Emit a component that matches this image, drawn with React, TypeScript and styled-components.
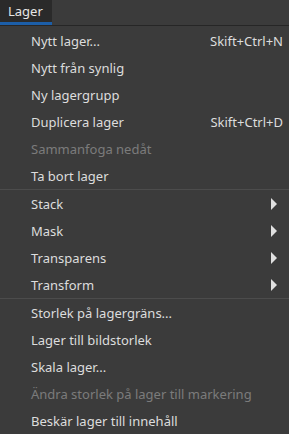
import React from 'react';
import styled, { createGlobalStyle } from 'styled-components';

const GlobalStyle = createGlobalStyle`
  html, body {
    margin: 0;
    padding: 0;
    background: #3b3b3b;
    width: 289px;
    height: 434px;
    overflow: hidden;
  }
`;

const Page = styled.div`
  width: 289px;
  height: 434px;
  background: #3b3b3b;
  font-family: 'Noto Sans', 'Open Sans', sans-serif;
  font-size: 13px;
  color: #dddddd;
  display: flex;
  flex-direction: column;
`;

const MenuBar = styled.div`
  height: 25px;
  display: flex;
  background: #3b3b3b;
  border-bottom: 1px solid #262626;
`;

const MenuTitle = styled.div`
  width: 52px;
  box-sizing: border-box;
  padding: 0 8px;
  background: #2a2a2a;
  border-bottom: 3px solid #1c5ea8;
  line-height: 22px;
  color: #e6e6e6;
`;

const Menu = styled.div`
  padding-top: 1px;
  display: flex;
  flex-direction: column;
`;

const Item = styled.div<{ disabled?: boolean }>`
  height: 27px;
  flex-shrink: 0;
  display: flex;
  align-items: center;
  padding: 0 6px 0 31px;
  color: ${({ disabled }) => (disabled ? '#7b7b7b' : '#dddddd')};
`;

const Label = styled.span`
  flex: 1;
  white-space: nowrap;
`;

const Shortcut = styled.span`
  white-space: nowrap;
`;

const Arrow = styled.svg`
  width: 6px;
  height: 12px;
  margin-right: 6px;
`;

const Separator = styled.div`
  height: 1px;
  flex-shrink: 0;
  background: #4c4c4c;
`;

type Entry = { label: string; shortcut?: string; disabled?: boolean; sub?: boolean } | 'sep';

const entries: Entry[] = [
  { label: 'Nytt lager...', shortcut: 'Skift+Ctrl+N' },
  { label: 'Nytt från synlig' },
  { label: 'Ny lagergrupp' },
  { label: 'Duplicera lager', shortcut: 'Skift+Ctrl+D' },
  { label: 'Sammanfoga nedåt', disabled: true },
  { label: 'Ta bort lager' },
  'sep',
  { label: 'Stack', sub: true },
  { label: 'Mask', sub: true },
  { label: 'Transparens', sub: true },
  { label: 'Transform', sub: true },
  'sep',
  { label: 'Storlek på lagergräns...' },
  { label: 'Lager till bildstorlek' },
  { label: 'Skala lager...' },
  { label: 'Ändra storlek på lager till markering', disabled: true },
  { label: 'Beskär lager till innehåll' },
];

export default function App() {
  return (
    <Page>
      <GlobalStyle />
      <MenuBar>
        <MenuTitle>Lager</MenuTitle>
      </MenuBar>
      <Menu>
        {entries.map((e, i) =>
          e === 'sep' ? (
            <Separator key={i} />
          ) : (
            <Item key={i} disabled={e.disabled}>
              <Label>{e.label}</Label>
              {e.shortcut && <Shortcut>{e.shortcut}</Shortcut>}
              {e.sub && (
                <Arrow viewBox="0 0 6 12">
                  <path d="M0 0 L6 6 L0 12 Z" fill="#e0e0e0" />
                </Arrow>
              )}
            </Item>
          )
        )}
      </Menu>
    </Page>
  );
}
